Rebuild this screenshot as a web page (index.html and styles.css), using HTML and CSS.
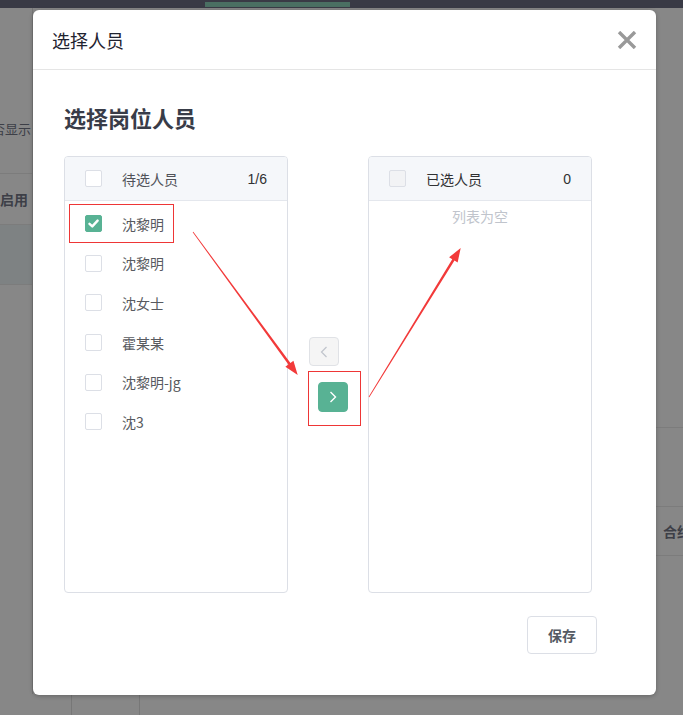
FILE: index.html
```html
<!DOCTYPE html>
<html lang="zh-CN">
<head>
<meta charset="utf-8">
<title>选择人员</title>
<link rel="stylesheet" href="styles.css">
</head>
<body>
<div class="page">
  <div class="topbar"><div class="tab"></div></div>
  <div class="bg-main">
    <div class="bg-left">
      <div class="bg-row r1"><span class="bg-text">否显示</span></div>
      <div class="bg-row r2"><span class="bg-text bold">启用</span></div>
      <div class="bg-row r3 hl"></div>
    </div>
    <div class="bg-right">
      <div class="bg-row q1"></div>
      <div class="bg-row q2"></div>
      <div class="bg-row q3"><span class="bg-text bold left">合约</span></div>
      <div class="bg-row q4"></div>
    </div>
  </div>
  <div class="bg-bottom">
    <div class="bcell c1"></div>
    <div class="bcell c2"></div>
    <div class="bcell c3"></div>
  </div>
</div>

<div class="modal">
  <div class="modal-header">
    <span class="modal-title">选择人员</span>
    <button class="close" aria-label="关闭">
      <svg width="20" height="18" viewBox="0 0 20 18"><path d="M2 1 L18 17 M18 1 L2 17" stroke="#999" stroke-width="3.4" stroke-linecap="butt" fill="none"/></svg>
    </button>
  </div>
  <div class="modal-body">
    <h2 class="subtitle">选择岗位人员</h2>
    <div class="transfer">
      <div class="panel">
        <div class="panel-head">
          <span class="cb"></span>
          <span class="head-title">待选人员</span>
          <span class="count">1/6</span>
        </div>
        <ul class="list">
          <li class="item"><span class="cb checked"><svg width="11" height="9" viewBox="0 0 11 9"><path d="M1.5 4.8 L4.3 7.4 L9.6 1.6" stroke="#fff" stroke-width="2.4" fill="none" stroke-linecap="round" stroke-linejoin="round"/></svg></span><span class="label">沈黎明</span></li>
          <li class="item"><span class="cb"></span><span class="label">沈黎明</span></li>
          <li class="item"><span class="cb"></span><span class="label">沈女士</span></li>
          <li class="item"><span class="cb"></span><span class="label">霍某某</span></li>
          <li class="item"><span class="cb"></span><span class="label">沈黎明-jg</span></li>
          <li class="item"><span class="cb"></span><span class="label">沈3</span></li>
        </ul>
      </div>
      <div class="actions">
        <button class="btn-move left-btn" disabled>
          <svg width="8" height="12" viewBox="0 0 8 12"><path d="M6.5 1 L1.5 6 L6.5 11" stroke="#c0c4cc" stroke-width="1.2" fill="none"/></svg>
        </button>
        <button class="btn-move right-btn">
          <svg width="8" height="12" viewBox="0 0 8 12"><path d="M1.5 1 L6.5 6 L1.5 11" stroke="#fff" stroke-width="1.4" fill="none"/></svg>
        </button>
      </div>
      <div class="panel">
        <div class="panel-head">
          <span class="cb disabled"></span>
          <span class="head-title dark">已选人员</span>
          <span class="count">0</span>
        </div>
        <p class="empty">列表为空</p>
      </div>
    </div>
    <div class="footer">
      <button class="save">保存</button>
    </div>
  </div>
</div>

<svg class="annot" width="683" height="715" viewBox="0 0 683 715">
  <rect x="69.5" y="204.5" width="104" height="38" fill="none" stroke="#ee3636" stroke-width="1"/>
  <rect x="308.5" y="371.5" width="52" height="54" fill="none" stroke="#ee3636" stroke-width="1"/>
  <polygon fill="#f23a3a" points="192.68,232.24 288.35,364.47 285.37,366.66 297.7,375 293.43,360.74 290.45,362.93 193.32,231.76"/>
  <polygon fill="#f23a3a" points="369.34,397.21 454.47,260.61 457.62,262.55 460.7,248 449.1,257.31 452.25,259.25 368.66,396.79"/>
</svg>
</body>
</html>
```

FILE: styles.css
```css
* { box-sizing: border-box; }
html, body { margin: 0; padding: 0; }
body {
  width: 683px;
  height: 715px;
  overflow: hidden;
  background: #878787;
  font-family: "Noto Sans CJK SC", "Noto Sans", sans-serif;
  position: relative;
}

/* ---------- background page (dimmed) ---------- */
.page { width: 683px; height: 715px; display: flex; flex-direction: column; }
.topbar { height: 8px; background: #393a45; padding-top: 2px; }
.tab { margin-left: 205px; width: 145px; height: 5px; background: #4a6f62; }
.bg-main { flex: 1; display: flex; justify-content: space-between; }
.bg-left { width: 33px; border-right: 1px solid #777; display: flex; flex-direction: column; }
.bg-right { width: 27px; display: flex; flex-direction: column; }
.bg-row { display: flex; justify-content: flex-end; align-items: flex-end; overflow: hidden; border-bottom: 1px solid #7c7c7c; }
.bg-text { white-space: nowrap; font-size: 13px; line-height: 16px; color: #3d3f47; padding-right: 1px; }
.bg-text.bold { font-weight: bold; font-size: 14px; padding-right: 4px; }
.bg-text.left { padding-left: 7px; padding-right: 0; }
.bg-right .bg-row { justify-content: flex-start; }
.r1 { height: 166px; padding-bottom: 36px; }
.r2 { height: 51px; padding-bottom: 17px; }
.r3 { height: 60px; }
.hl { background: #7e8283; }
.q1 { height: 420px; }
.q2 { height: 79px; }
.q3 { height: 49px; padding-bottom: 16px; }
.q4 { height: 40px; border-bottom: none; }
.bg-bottom { height: 21px; display: flex; }
.bcell { height: 21px; }
.c1 { width: 72px; border-right: 1px solid #777; }
.c2 { width: 68px; border-right: 1px solid #777; }
.c3 { flex: 1; }

/* ---------- modal ---------- */
.modal {
  position: absolute;
  left: 33px;
  top: 10px;
  width: 623px;
  height: 685px;
  background: #fff;
  border-radius: 6px;
  box-shadow: 0 1px 4px rgba(0,0,0,0.25);
  display: flex;
  flex-direction: column;
}
.modal-header {
  height: 60px;
  border-bottom: 1px solid #e5e5e5;
  display: flex;
  align-items: center;
  justify-content: space-between;
  padding: 0 19px 0 19px;
}
.modal-title { font-size: 18px; line-height: 24px; color: #1f2330; }
.close {
  border: 0; background: none; padding: 0; margin: 0; width: 20px; height: 18px; display: flex; cursor: pointer;
}
.modal-body { padding: 32px 59px 40px 31px; display: flex; flex-direction: column; flex: 1; }
.subtitle { margin: 0; font-size: 22px; line-height: 30px; font-weight: bold; color: #383c48; }
.transfer { margin-top: 24px; display: flex; width: 528px; }
.panel {
  width: 224px;
  height: 437px;
  border: 1px solid #dcdfe6;
  border-radius: 4px;
  overflow: hidden;
}
.panel-head {
  height: 44px;
  background: #f5f7fa;
  border-bottom: 1px solid #e4e7ed;
  display: flex;
  align-items: center;
  padding: 0 20px 0 20px;
}
.cb {
  width: 17px; height: 17px;
  border: 1px solid #dcdfe6;
  border-radius: 2px;
  background: #fff;
  flex: none;
  display: flex; align-items: center; justify-content: center;
}
.cb.checked { background: #58b294; border-color: #58b294; }
.cb.disabled { background: #f2f3f5; border-color: #dcdfe6; }
.head-title { margin-left: 20px; font-size: 14px; line-height: 20px; color: #505259; flex: 1; }
.head-title.dark { color: #303133; }
.count { font-size: 14px; line-height: 20px; color: #303133; font-family: "Liberation Sans", Arial, sans-serif; }
.list { list-style: none; margin: 0; padding: 3px 0 0 0; }
.item { height: 39.6px; display: flex; align-items: center; padding-left: 20px; }
.label { margin-left: 20px; font-size: 14px; line-height: 20px; color: #585a60; }
.empty { margin: 0; text-align: center; font-size: 14px; line-height: 30px; color: #c0c4cc; }
.actions {
  width: 80px;
  display: flex;
  flex-direction: column;
  justify-content: center;
  align-items: flex-start;
  gap: 16px;
}
.btn-move {
  width: 30px; padding: 0; border-radius: 4px; display: flex; align-items: center; justify-content: center;
}
.left-btn { height: 29px; margin-left: 21px; background: #f5f5f5; border: 1px solid #e0e2e6; }
.right-btn { height: 30px; margin-left: 30px; background: #58b294; border: 1px solid #58b294; }
.footer { margin-top: 23px; display: flex; justify-content: flex-end; margin-right: -5px; width: 533px; }
.save {
  width: 70px; height: 38px;
  border: 1px solid #dcdfe6; border-radius: 4px; background: #fff;
  font-family: "Noto Sans CJK SC", sans-serif;
  font-size: 14px; font-weight: bold; color: #555a63; padding: 0;
}
.annot { position: absolute; left: 0; top: 0; pointer-events: none; }
```
